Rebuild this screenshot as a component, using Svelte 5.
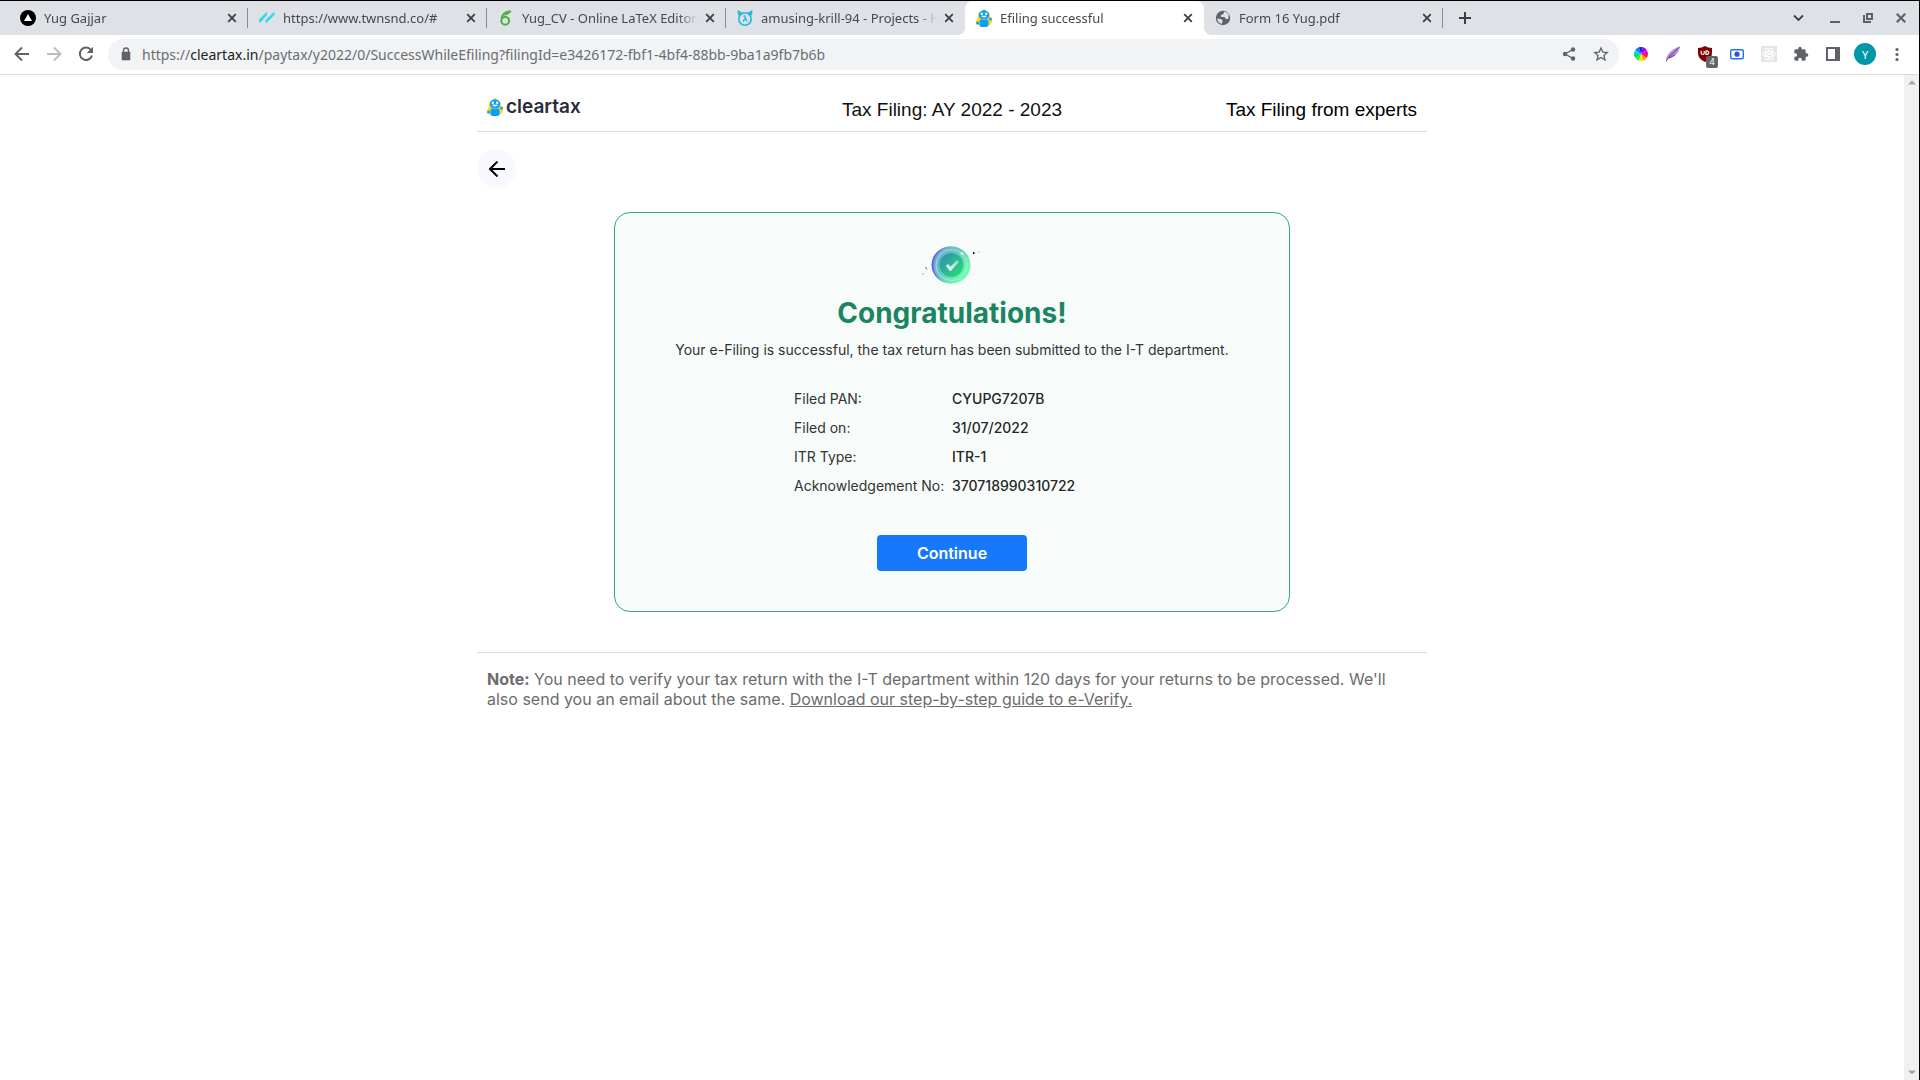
<script>
  const tabs = [
    { title: 'Yug Gajjar', icon: 'triangle' },
    { title: 'https://www.twnsnd.co/#', icon: 'stripes' },
    { title: 'Yug_CV - Online LaTeX Editor Overleaf', icon: 'overleaf' },
    { title: 'amusing-krill-94 - Projects - Hasura', icon: 'hasura' },
    { title: 'Efiling successful', icon: 'robot', active: true },
    { title: 'Form 16 Yug.pdf', icon: 'globe' },
  ];
  const details = [
    ['Filed PAN:', 'CYUPG7207B'],
    ['Filed on:', '31/07/2022'],
    ['ITR Type:', 'ITR-1'],
    ['Acknowledgement No:', '370718990310722'],
  ];
  const wheel = ['#ff2020', '#ff9a00', '#e8f000', '#50e020', '#00d880', '#00d8f0', '#1080ff', '#3010f0', '#9800ff', '#f000e0'];
  const slice = (i) => {
    const a = (i * Math.PI) / 5;
    const b = ((i + 1) * Math.PI) / 5;
    return `M8 8L${8 + 7 * Math.cos(a)} ${8 + 7 * Math.sin(a)}A7 7 0 0 1 ${8 + 7 * Math.cos(b)} ${8 + 7 * Math.sin(b)}Z`;
  };
</script>

{#snippet robot()}
  <svg viewBox="0 0 16 18" width="16" height="18" aria-hidden="true">
    <path d="M2 8Q1 2 8 2Q15 2 14 8L16 11Q16 16 12 17H4Q0 16 0 12Z" fill="#ffdb18" />
    <path d="M5 2.5Q8-1.5 11 2.5Z" fill="#43cf78" />
    <rect x="3" y="2" width="10" height="8" rx="3.5" fill="#0a9dff" />
    <path d="M3.5 12Q3.5 10.5 5 10.5H11Q12.500 10.500 12.500 12V16Q12.500 18 10 18H6Q3.500 18 3.500 16Z" fill="#0a9dff" />
    <circle cx="1.500" cy="14" r="1.500" fill="#0a9dff" />
    <circle cx="14.500" cy="10" r="1.500" fill="#0a9dff" />
    <circle cx="5.800" cy="4.800" r="1.200" fill="#fff" />
    <circle cx="10.200" cy="4.800" r="1.200" fill="#fff" />
    <path d="M5.500 7Q8 9.800 10.500 7Z" fill="#fff" stroke="#fff" stroke-width=".6" />
  </svg>
{/snippet}

{#snippet favicon(name)}
  {#if name === 'robot'}
    {@render robot()}
  {:else}
    <svg viewBox="0 0 16 16" width="16" height="16" aria-hidden="true">
      {#if name === 'triangle'}
        <circle cx="8" cy="8" r="8" fill="#000" />
        <path d="M8 4L12 11H4Z" fill="#fff" />
      {:else if name === 'stripes'}
        <path d="M0 9.500L8 1.500V5L1 13L0 12ZM6.500 10L15.500 1.500V5L7.500 13L6.500 12.500Z" fill="#38d8ec" />
      {:else if name === 'overleaf'}
        <path d="M13 1.500C8 .8 4.300 4 3.500 8.500" fill="none" stroke="#4caf3f" stroke-width="1.800" />
        <circle cx="7.200" cy="10.800" r="3.900" fill="none" stroke="#4caf3f" stroke-width="2" />
        <path d="M6 5.800C9 5.500 11 4 13.500 1.200C10 1 7.500 2.500 6 5.800Z" fill="#4caf3f" />
      {:else if name === 'hasura'}
        <circle cx="8" cy="9" r="6.200" fill="none" stroke="#22b9dd" stroke-width="1.600" />
        <path d="M.7 0L5 2.500L2 6Q.2 4 .7 0ZM15.300 0L11 2.500L14 6Q15.800 4 15.300 0Z" fill="#22b9dd" />
        <path d="M6.500 6H7.500L10 11.500M8.200 8.500L6 11.500" fill="none" stroke="#22b9dd" stroke-width="1.300" />
      {:else}
        <circle cx="8" cy="8" r="7.200" fill="#5f6368" />
        <path d="M9 1.800L8.500 4L6 5V7H9.500L11 9H13.500V6L14 5Q12.500 2 9 1.800ZM2 8.500L6 9L8 11L7 12V14Q3 13 2 8.500Z" fill="#dee1e6" />
      {/if}
    </svg>
  {/if}
{/snippet}

<div class="window">
  <nav class="tabs" aria-label="Browser tabs">
    {#each tabs as tab}
      <div class="tab" class:active={tab.active}>
        <span class="fav">{@render favicon(tab.icon)}</span>
        <span class="title">{tab.title}</span>
        <button class="close" aria-label={`Close ${tab.title}`}>
          <svg viewBox="0 0 10 10" width="10" height="10"><path d="M1.200 1.200L8.800 8.800M8.800 1.200L1.200 8.800" stroke="#3c4043" stroke-width="1.800" /></svg>
        </button>
      </div>
    {/each}
    <button class="new" aria-label="New tab">
      <svg viewBox="0 0 12 12" width="12" height="12"><path d="M6 0V12M0 6H12" stroke="#3c4043" stroke-width="2" /></svg>
    </button>
    <div class="controls">
      <button aria-label="Search tabs"><svg viewBox="0 0 16 16"><path d="M3 5.500L7.500 10L12 5.500" fill="none" stroke="#3c4043" stroke-width="1.800" /></svg></button>
      <button aria-label="Minimise"><svg viewBox="0 0 16 16"><path d="M5 12H15" stroke="#5f6368" stroke-width="2" /></svg></button>
      <button aria-label="Restore"><svg viewBox="0 0 16 16"><path d="M8 4H13V9H8ZM5 5V12H12" fill="none" stroke="#5f6368" stroke-width="2" /></svg></button>
      <button aria-label="Close window"><svg viewBox="0 0 16 16"><path d="M3.800 3.800L12.200 12.200M12.200 3.800L3.800 12.200" stroke="#5f6368" stroke-width="2.200" /></svg></button>
    </div>
  </nav>

  <div class="toolbar">
    <div class="history">
      <button aria-label="Back"><svg viewBox="0 0 16 16"><path d="M15 8H2M8 1.500L1.500 8L8 14.500" fill="none" stroke="#5f6368" stroke-width="1.900" /></svg></button>
      <button aria-label="Forward"><svg viewBox="0 0 16 16"><path d="M1 8H14M8 1.500L14.500 8L8 14.500" fill="none" stroke="#babcbe" stroke-width="1.900" /></svg></button>
      <button aria-label="Reload"><svg viewBox="0 0 16 16"><path d="M13 4A6.200 6.200 0 1 0 14 9.500" fill="none" stroke="#5f6368" stroke-width="2" /><path d="M15 .8V7H8.800Z" fill="#5f6368" /></svg></button>
    </div>
    <div class="omnibox">
      <svg class="lock" viewBox="0 0 10 14" width="10" height="14" aria-hidden="true"><rect x="1" y="5" width="8" height="8" rx="1" fill="#5f6368" /><path d="M1 5H9V13H1Z" fill="#5f6368" stroke="#5f6368" stroke-width=".6" /><path d="M2.500 6V3.500A2.500 2.500 0 0 1 7.500 3.500V6" fill="none" stroke="#5f6368" stroke-width="1.300" /></svg>
      <span class="url">https://<b>cleartax.in</b>/paytax/y2022/0/SuccessWhileEfiling?filingId=e3426172-fbf1-4bf4-88bb-9ba1a9fb7b6b</span>
      <button aria-label="Share"><svg viewBox="0 0 16 16"><path d="M12 3.500L4 8L12 12.500" fill="none" stroke="#5f6368" stroke-width="1.400" /><g fill="#5f6368"><circle cx="12" cy="3.500" r="2.200" /><circle cx="4" cy="8" r="2.200" /><circle cx="12" cy="12.500" r="2.200" /></g></svg></button>
      <button aria-label="Bookmark this page"><svg viewBox="0 0 16 16"><path d="M8 2L9.800 6.100L14.300 6.500L10.900 9.400L12 13.800L8 11.400L4 13.800L5.100 9.400L1.700 6.500L6.200 6.100Z" fill="none" stroke="#5f6368" stroke-width="1.300" /></svg></button>
    </div>
    <div class="extensions">
      <button aria-label="Colour picker"><svg viewBox="0 0 16 16">{#each wheel as color, i}<path d={slice(i)} fill={color} />{/each}</svg></button>
      <button aria-label="Feather"><svg viewBox="0 0 16 16"><path d="M1 14.500C1.500 8 7 3 15 .5C14 6 10 11.500 3 12.500Z" fill="#b48cd8" /><path d="M1 15.500L4 11L14.500 1M4 12L10 9" fill="none" stroke="#6d3b97" /></svg></button>
      <button class="shield" aria-label="Content blocker"><svg viewBox="0 0 16 16"><path d="M8 0Q11 2 15 2V7Q15 13 8 16Q1 13 1 7V2Q5 2 8 0Z" fill="#800000" /><path d="M4.200 5V7.500Q5.800 9.500 7.200 7.500V5M9 5V8.500H10.500Q13 6.800 10.500 5Z" fill="none" stroke="#fff" stroke-width="1.200" /></svg><span>4</span></button>
      <button aria-label="Screen recorder"><svg viewBox="0 0 16 16"><rect x="1.700" y="3.700" width="12.600" height="9" rx="1.500" fill="#fff" stroke="#1677f0" stroke-width="1.400" /><circle cx="8" cy="8.200" r="2.600" fill="#3450d0" /></svg></button>
      <button aria-label="React tools"><svg viewBox="0 0 16 16"><rect width="16" height="16" fill="#e5e5e5" /><g fill="none" stroke="#fff"><ellipse cx="8" cy="8" rx="6.500" ry="2.500" /><ellipse cx="8" cy="8" rx="6.500" ry="2.500" transform="rotate(60 8 8)" /><ellipse cx="8" cy="8" rx="6.500" ry="2.500" transform="rotate(120 8 8)" /></g><circle cx="8" cy="8" r="1.300" fill="#fff" /></svg></button>
      <button aria-label="Extensions"><svg viewBox="0 0 24 24" class="puzzle"><path fill="#5f6368" d="M20.500 11H19V7a2 2 0 0 0-2-2h-4V3.500a2.500 2.500 0 0 0-5 0V5H4a2 2 0 0 0-2 2v3.800h1.500a2.700 2.700 0 0 1 0 5.400H2V20a2 2 0 0 0 2 2h3.800v-1.500a2.700 2.700 0 0 1 5.400 0V22H17a2 2 0 0 0 2-2v-4h1.500a2.500 2.500 0 0 0 0-5z" /></svg></button>
      <button aria-label="Side panel"><svg viewBox="0 0 16 16"><path d="M1 1H15V15H1ZM3 3V13H10V3Z" fill="#5f6368" fill-rule="evenodd" /></svg></button>
      <button class="avatar" aria-label="Profile">Y</button>
      <button aria-label="Menu"><svg viewBox="0 0 16 16"><g fill="#5f6368"><circle cx="8" cy="3.500" r="1.600" /><circle cx="8" cy="8.500" r="1.600" /><circle cx="8" cy="13.500" r="1.600" /></g></svg></button>
    </div>
  </div>

  <div class="viewport">
    <div class="page">
      <header>
        <a class="logo" href="#home" aria-label="cleartax">{@render robot()}<span>cleartax</span></a>
        <span class="filing">Tax Filing: AY 2022 - 2023</span>
        <a class="experts" href="#experts">Tax Filing from experts</a>
      </header>
      <main>
        <button class="back" aria-label="Go back"><svg viewBox="0 0 16 16" width="16" height="16"><path d="M16 8H1.500M8.500 .5L1 8L8.500 15.500" fill="none" stroke="#000" stroke-width="2" /></svg></button>
        <section class="card">
          <svg class="badge" viewBox="0 0 60 40" width="60" height="40" aria-hidden="true">
            <defs>
              <linearGradient id="rim" x1="0" x2="1" y1=".3" y2=".6"><stop stop-color="#5b4cf5" /><stop offset=".35" stop-color="#64aacb" /><stop offset="1" stop-color="#6bfaae" /></linearGradient>
              <linearGradient id="disc" x1="0" x2="1" y1=".1" y2=".8"><stop stop-color="#6ba0d2" /><stop offset=".4" stop-color="#6cc3c4" /><stop offset=".85" stop-color="#6cfcae" /></linearGradient>
              <linearGradient id="core" x1="0" x2="1" y1="0" y2="1"><stop stop-color="#3089b3" /><stop offset=".85" stop-color="#2bd680" /></linearGradient>
              <linearGradient id="tick" x1="0" x2="1" y1="1" y2="0"><stop stop-color="#fff" /><stop offset="1" stop-color="#7fdcb0" /></linearGradient>
            </defs>
            <circle cx="28" cy="20" r="18.500" fill="url(#rim)" />
            <circle cx="30" cy="20" r="18.500" fill="url(#disc)" />
            <circle cx="29.500" cy="20" r="15.500" fill="none" stroke="#b5eadf" stroke-width=".8" />
            <circle cx="29.500" cy="20" r="12" fill="url(#core)" />
            <path d="M25 20L28.500 24L36 16" fill="none" stroke="url(#tick)" stroke-width="3" />
            <path d="M39 8H41V9H39Z" fill="#fff" stroke="#fff" />
            <path d="M51 7H52.500V9H51Z" fill="#111" />
            <path d="M56 6H58V8H56Z" fill="#ffc8f8" />
            <path d="M3.500 22L5 24.500" stroke="#6658df" />
            <path d="M0 29H2" stroke="#58d59d" />
          </svg>
          <h1>Congratulations!</h1>
          <p>Your e-Filing is successful, the tax return has been submitted to the I-T department.</p>
          <dl>
            {#each details as [label, value]}
              <dt>{label}</dt><dd>{value}</dd>
            {/each}
          </dl>
          <button class="continue">Continue</button>
        </section>
      </main>
      <footer><b>Note:</b> You need to verify your tax return with the I-T department within 120 days for your returns to be processed. We'll also send you an email about the same. <a href="#guide">Download our step-by-step guide to e-Verify.</a></footer>
    </div>
    <div class="scrollbar" aria-hidden="true">
      <svg viewBox="0 0 8 5" width="8" height="5"><path d="M0 4.500L4 .5L8 4.500Z" fill="#a3a3a3" /></svg>
      <svg viewBox="0 0 8 5" width="8" height="5"><path d="M0 .5L4 4.500L8 .5Z" fill="#a3a3a3" /></svg>
    </div>
  </div>
</div>

<style>
  :global(body) { margin: 0; }
  * { box-sizing: border-box; }
  button { padding: 0; border: 0; background: none; font: inherit; display: grid; place-items: center; flex: none; }
  .window { display: flex; flex-direction: column; min-height: 100vh; background: #fff; border-top: 1px solid #000; border-right: 1px solid #000; font-family: "Noto Sans", sans-serif; }

  .tabs { display: flex; height: 34px; padding-left: 9px; background: #dee1e6; color: #45494d; font-size: 13px; }
  .tab { position: relative; display: flex; align-items: center; flex: 0 1 239px; min-width: 0; padding: 0 8px 0 11px; }
  .tab::after { content: ""; position: absolute; right: 0; top: 7px; height: 20px; width: 1px; background: #898c90; }
  .tab.active::after, .tab:has(+ .active)::after { display: none; }
  .tab.active { background: #fff; border-radius: 8px 8px 0 0; }
  .tab:has(+ .active) { background: radial-gradient(circle at 0 0, #dee1e6 8px, #fff 8px) right bottom / 8px 8px no-repeat; }
  .tab.active + .tab { background: radial-gradient(circle at 100% 0, #dee1e6 8px, #fff 8px) left bottom / 8px 8px no-repeat; }
  .fav { display: grid; place-items: center; width: 16px; height: 18px; margin-right: 8px; flex: none; }
  .title { flex: 1; min-width: 0; overflow: hidden; white-space: nowrap; mask-image: linear-gradient(to right, #000 calc(100% - 20px), transparent); }
  .close { width: 16px; height: 16px; margin-left: 4px; }
  .new { width: 24px; margin-left: 10px; }
  .controls { display: flex; gap: 16px; margin-left: auto; padding-right: 9px; }
  .controls svg, .toolbar svg { display: block; width: 16px; height: 16px; }
  .controls button { width: 18px; }

  .toolbar { display: flex; align-items: center; height: 40px; padding: 0 14px; border-bottom: 1px solid #d9dadc; }
  .history { display: flex; gap: 16px; margin-right: 14px; padding-bottom: 1px; }
  .omnibox { display: flex; align-items: center; flex: 1; min-width: 0; height: 31px; padding: 0 10px 1px 13px; border-radius: 16px; background: #f1f3f4; color: #6a6e73; font-size: 14px; }
  .omnibox .lock { width: 10px; height: 14px; margin-right: 11px; }
  .omnibox button { margin-left: 16px; }
  .url { flex: 1; min-width: 0; overflow: hidden; white-space: nowrap; }
  .url b { font-weight: 400; color: #202124; }
  .extensions { display: flex; align-items: center; gap: 16px; margin-left: 14px; padding-bottom: 1px; }
  .extensions .avatar { width: 22px; height: 22px; margin: 0 -3px; border-radius: 50%; background: #0097a7; color: #fff; font-size: 11px; }
  .shield { position: relative; }
  .shield span { position: absolute; left: 9px; top: 10px; width: 12px; height: 12px; border-radius: 2px; background: #666; color: #fff; font-size: 9px; line-height: 12px; text-align: center; }

  .viewport { display: flex; flex: 1; }
  .page { flex: 1; min-width: 0; font-family: Inter, sans-serif; padding: 0 16px; }
  header, main, footer { max-width: 950px; margin: 0 auto; }
  header { display: grid; grid-template-columns: 1fr auto 1fr; align-items: center; height: 57px; padding: 14px 10px 0; border-bottom: 1px solid #dcdcdc; font: 19px "Liberation Sans", sans-serif; color: #111; }
  header a { color: #000; text-decoration: none; }
  .logo { display: flex; align-items: center; gap: 3px; padding-bottom: 6px; }
  .logo span { font: 600 19px/20px Inter, sans-serif; color: #272c38; }
  .experts { justify-self: end; }
  .back { width: 39px; height: 39px; margin-top: 17px; border-radius: 50%; background: #f8f9ff; }
  .card { display: flex; flex-direction: column; align-items: center; max-width: 676px; margin: 24px auto 0; padding: 32px 24px 40px; border: 1px solid #34a984; border-radius: 16px; background: #f7fcfa; color: #333; font-size: 14px; }
  .badge { display: block; }
  h1 { margin: 8px 0 0; font-size: 28px; line-height: 40px; font-weight: 700; color: #1b855f; }
  p { margin: 7px 0 0; line-height: 20px; text-align: center; }
  dl { display: grid; grid-template-columns: 1fr 1fr; row-gap: 9px; width: 316px; max-width: 100%; margin: 29px 0 0; line-height: 20px; }
  dd { margin: 0; font-weight: 500; color: #262626; }
  .continue { width: 150px; height: 36px; margin-top: 39px; border-radius: 4px; background: #1678fc; color: #fff; font-size: 16px; font-weight: 600; }
  footer { margin-top: 40px; padding: 16px 10px; border-top: 1px solid #dcdcdc; color: #6c6c6c; font-size: 16px; line-height: 20px; }
  footer a { color: inherit; }
  .scrollbar { display: flex; flex-direction: column; justify-content: space-between; align-items: center; width: 15px; padding: 5px 0; background: #f1f1f1; }
</style>
